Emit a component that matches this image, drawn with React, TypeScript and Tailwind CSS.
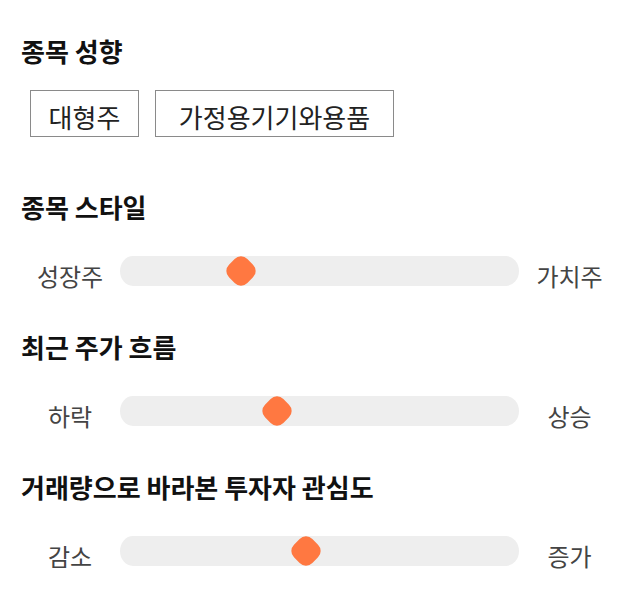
const font = {
  fontFamily: '"Noto Sans CJK KR", "Noto Sans", sans-serif',
};

function Slider({
  left,
  right,
  pos,
}: {
  left: string;
  right: string;
  pos: number;
}) {
  return (
    <div className="flex items-center h-[30px] -ml-[21px]">
      <div className="w-[120px] pl-[20px] pt-[10px] text-center text-[24px] leading-[30px] text-[#444]">
        {left}
      </div>
      <div className="relative w-[399px] h-[30px] bg-[#eeeeee] rounded-[13px/15px]">
        <div
          className="absolute top-[2px] w-[26px] h-[26px] rounded-[9px] rotate-45 bg-[#ff7841]"
          style={{ left: pos - 13 }}
        />
      </div>
      <div className="w-[101px] pt-[10px] text-center text-[24px] leading-[30px] text-[#444]">
        {right}
      </div>
    </div>
  );
}

export default function App() {
  return (
    <div className="w-[640px] h-[606px] bg-white pl-[21px]" style={font}>
      {/* 종목 성향 */}
      <h2 className="pt-[36px] text-[26px] font-bold leading-[30px] text-[#111]">
        종목 성향
      </h2>
      <div className="flex gap-4 ml-[9px] mt-[24px]">
        <div className="w-[109px] h-[47px] pt-[7px] border border-[#8a8a8a] flex items-center justify-center text-[26px] leading-[30px] text-[#222]">
          대형주
        </div>
        <div className="w-[239px] h-[47px] pt-[7px] border border-[#8a8a8a] flex items-center justify-center text-[26px] leading-[30px] text-[#222]">
          가정용기기와용품
        </div>
      </div>

      {/* 종목 스타일 */}
      <h2 className="mt-[55px] text-[26px] font-bold leading-[30px] text-[#111]">
        종목 스타일
      </h2>
      <div className="mt-[34px]">
        <Slider left="성장주" right="가치주" pos={121} />
      </div>

      {/* 최근 주가 흐름 */}
      <h2 className="mt-[46px] text-[26px] font-bold leading-[30px] text-[#111]">
        최근 주가 흐름
      </h2>
      <div className="mt-[34px]">
        <Slider left="하락" right="상승" pos={157} />
      </div>

      {/* 투자자 관심도 */}
      <h2 className="mt-[46px] text-[26px] font-bold leading-[30px] text-[#111]">
        거래량으로 바라본 투자자 관심도
      </h2>
      <div className="mt-[34px]">
        <Slider left="감소" right="증가" pos={186} />
      </div>
    </div>
  );
}
